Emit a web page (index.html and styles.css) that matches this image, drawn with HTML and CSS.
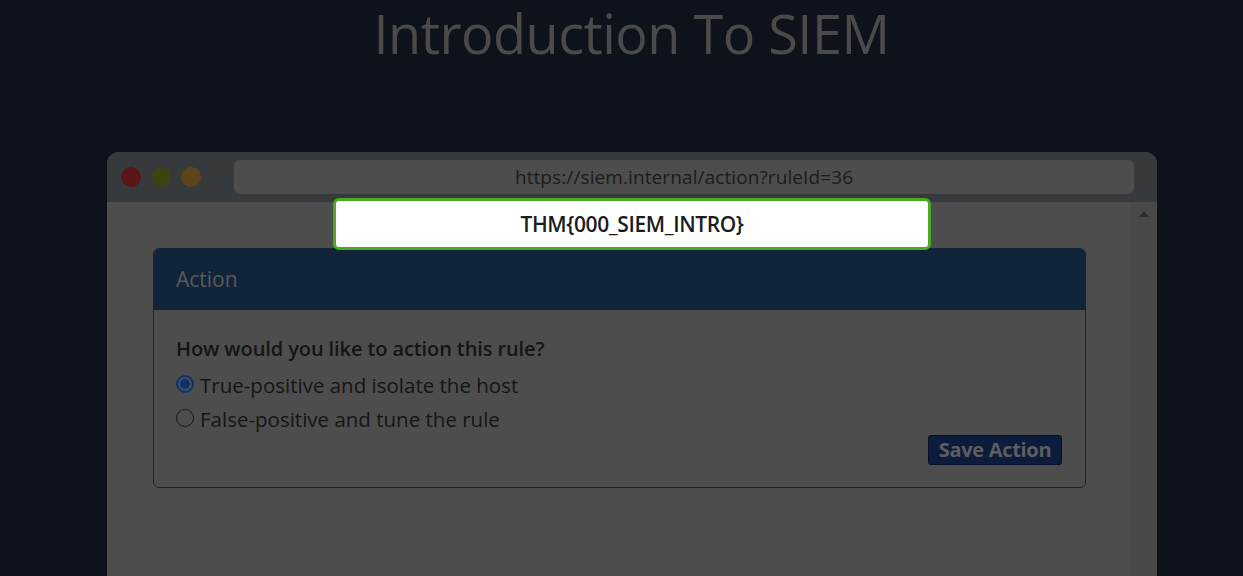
FILE: index.html
```html
<!DOCTYPE html>
<html>
<head>
<meta charset="utf-8">
<link rel="stylesheet" href="styles.css">
</head>
<body>
<h1 class="title">Introduction To SIEM</h1>
<div class="window">
  <div class="toolbar">
    <div class="dots">
      <span class="dot red"></span>
      <span class="dot green"></span>
      <span class="dot orange"></span>
    </div>
    <div class="address">https://siem.internal/action?ruleId=36</div>
  </div>
  <div class="viewport">
    <div class="content">
      <div class="card">
        <div class="card-header">Action</div>
        <div class="card-body">
          <p class="question">How would you like to action this rule?</p>
          <label class="option"><span class="radio checked"></span>True-positive and isolate the host</label>
          <label class="option"><span class="radio"></span>False-positive and tune the rule</label>
          <div class="actions"><button class="save">Save Action</button></div>
        </div>
      </div>
    </div>
    <div class="scrollbar"><span class="arrow"></span></div>
  </div>
  <div class="flag">THM{000_SIEM_INTRO}</div>
</div>
</body>
</html>
```

FILE: styles.css
```css
* { box-sizing: border-box; }
html, body {
  margin: 0;
  padding: 0;
  background: #0e121b;
  height: 576px;
  overflow: hidden;
  font-family: "Open Sans", "Noto Sans", sans-serif;
}
.title {
  margin: 0;
  padding-top: 6px;
  height: 152px;
  text-align: center;
  padding-left: 20px;
  font-weight: 400;
  font-size: 54px;
  line-height: 54px;
  color: #4a4a4a;
  letter-spacing: -0.5px;
}
.window {
  position: relative;
  margin-left: 107px;
  width: 1050px;
  height: 424px;
  border-radius: 12px 12px 0 0;
  overflow: hidden;
  background: #4d4d4d;
}
.toolbar {
  height: 50px;
  background: #363a3d;
  display: flex;
  align-items: center;
  padding: 0 23px 0 14px;
}
.dots {
  display: flex;
  gap: 10px;
  width: 113px;
}
.dot {
  width: 20px;
  height: 20px;
  border-radius: 50%;
}
.red { background: #5a1519; }
.green { background: #3b4413; }
.orange { background: #5e4419; }
.address {
  flex: 1;
  height: 34px;
  background: #4d4d4d;
  border-radius: 6px;
  color: #1c1c1c;
  font-size: 19px;
  line-height: 34px;
  text-align: center;
  letter-spacing: 0.1px;
}
.viewport {
  display: flex;
  height: 374px;
}
.content {
  flex: 1;
  padding: 46px 45px 0 46px;
}
.scrollbar {
  width: 26px;
  background: #494949;
  position: relative;
  border-left: 1px solid #474747;
}
.arrow {
  position: absolute;
  left: 7px;
  top: 9px;
  width: 0;
  height: 0;
  border-left: 5px solid transparent;
  border-right: 5px solid transparent;
  border-bottom: 6px solid #2a2a2a;
}
.card {
  border: 1px solid #152436;
  border-radius: 6px;
  overflow: hidden;
}
.card-header {
  height: 61px;
  background: #10243a;
  color: #5a5a5a;
  font-size: 21px;
  line-height: 60px;
  padding-left: 22px;
}
.card-body {
  padding: 25px 22px 22px 22px;
  color: #151515;
}
.question {
  margin: 0 0 5px 0;
  font-size: 20px;
  font-weight: 600;
  line-height: 28px;
  letter-spacing: -0.1px;
}
.option {
  display: flex;
  align-items: center;
  font-size: 20.5px;
  line-height: 34px;
  height: 34px;
  gap: 6px;
  letter-spacing: 0;
}
.radio {
  width: 18px;
  height: 18px;
  border-radius: 50%;
  border: 1.5px solid #1a1a1a;
  margin-top: -2px;
  position: relative;
  flex: none;
}
.radio.checked {
  border: 2px solid #0a3470;
  background: #4d4d4d;
}
.radio.checked::after {
  content: "";
  position: absolute;
  left: 2px;
  top: 2px;
  width: 10px;
  height: 10px;
  border-radius: 50%;
  background: #0a3470;
}
.actions {
  display: flex;
  justify-content: flex-end;
  margin-top: -1px;
  padding-right: 1px;
}
.save {
  width: 134px;
  height: 30px;
  background: #0b1c3c;
  border: 1px solid #06122a;
  border-radius: 3px;
  color: #5e5e5e;
  font-family: "Open Sans", "Noto Sans", sans-serif;
  font-weight: 700;
  font-size: 20px;
  line-height: 26px;
  padding: 0;
  letter-spacing: -0.3px;
}
.flag {
  position: absolute;
  left: 226px;
  top: 46px;
  width: 598px;
  height: 52px;
  background: #ffffff;
  border: 3px solid #4caa22;
  border-radius: 6px;
  color: #1c1c1c;
  font-size: 21px;
  font-weight: 600;
  line-height: 46px;
  text-align: center;
  letter-spacing: -0.4px;
}
```
